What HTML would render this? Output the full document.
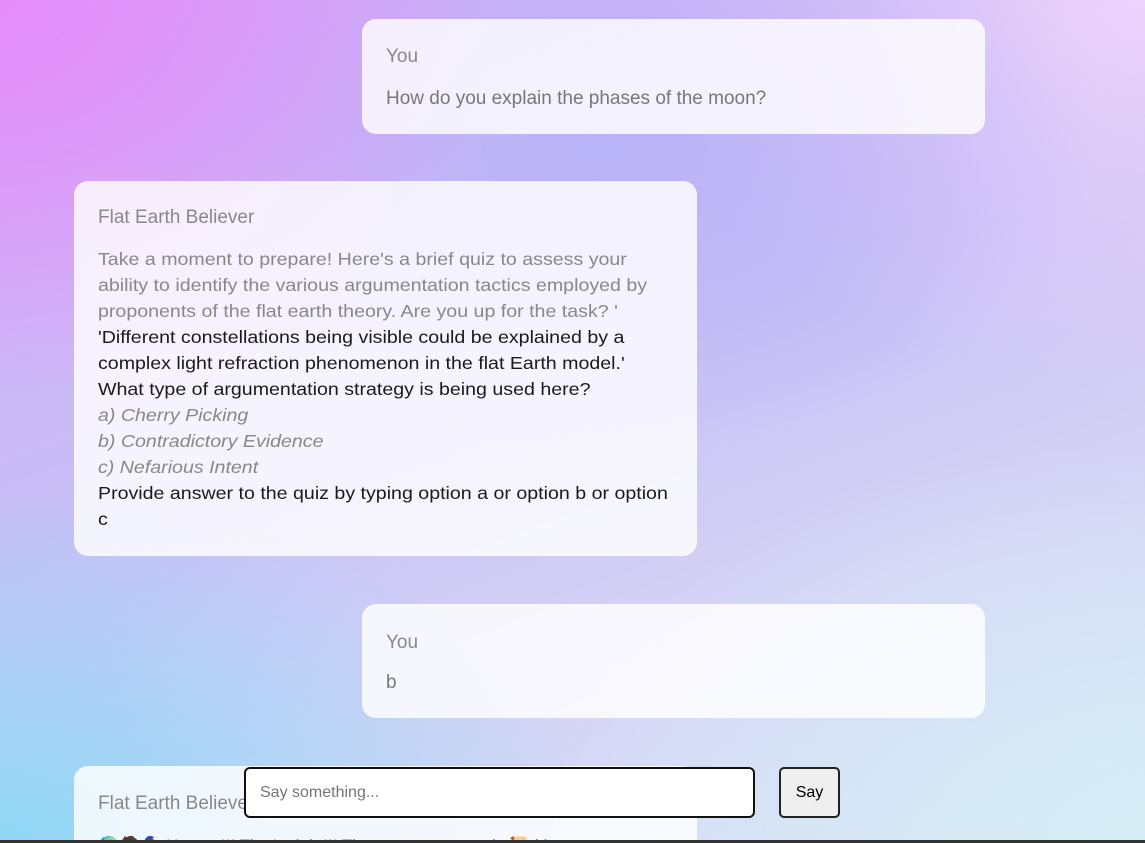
<!DOCTYPE html>
<html><head><meta charset="utf-8"><style>
html,body{margin:0;padding:0;width:1145px;height:843px;overflow:hidden}
body{position:relative;font-family:"Liberation Sans",sans-serif;
background:
radial-gradient(ellipse 500px 400px at 0px 0px,#e48cfa 0%,rgba(228,140,250,0) 100%),
radial-gradient(ellipse 600px 350px at 0px 843px,#8fd8f6 0%,rgba(143,216,246,0) 100%),
radial-gradient(ellipse 500px 300px at 600px 150px,#b9b3f7 0%,rgba(185,179,247,0) 100%),
radial-gradient(ellipse 500px 400px at 1145px 0px,#ecd3fb 0%,rgba(236,211,251,0) 100%),
radial-gradient(ellipse 600px 400px at 1145px 843px,#d6eef6 0%,rgba(214,238,246,0) 100%),
linear-gradient(160deg,#d4a8f6 0%,#c7c0f6 45%,#d5d3f5 70%,#d7e4f6 100%);}
.b{position:absolute;background:rgba(255,255,255,0.82);border-radius:14px;box-sizing:border-box;padding:0 24px}
.n{color:#888;font-size:19px;font-weight:300}
.t{color:#777;font-size:19px;font-weight:300}
.q{font-size:17.5px;line-height:26px;white-space:nowrap;transform:scaleX(1.12);transform-origin:0 0}
.g{color:#888}.k{color:#1a1a1a}.i{color:#888;font-style:italic}
</style></head><body>
<div class="b" style="left:362px;top:19px;width:623px;height:115px">
<div class="n" style="position:absolute;top:38px;left:24px;line-height:0">You</div>
<div class="t" style="position:absolute;top:80px;left:24px;line-height:0">How do you explain the phases of the moon?</div>
</div>
<div class="b" style="left:74px;top:181px;width:623px;height:375px">
<div class="n" style="position:absolute;top:37px;left:24px;line-height:0">Flat Earth Believer</div>
<div class="q" style="position:absolute;top:65px;left:24px">
<div class="g">Take a moment to prepare! Here's a brief quiz to assess your</div>
<div class="g">ability to identify the various argumentation tactics employed by</div>
<div class="g">proponents of the flat earth theory. Are you up for the task? '</div>
<div class="k">'Different constellations being visible could be explained by a</div>
<div class="k">complex light refraction phenomenon in the flat Earth model.'</div>
<div class="k">What type of argumentation strategy is being used here?</div>
<div class="i">a) Cherry Picking</div>
<div class="i">b) Contradictory Evidence</div>
<div class="i">c) Nefarious Intent</div>
<div class="k">Provide answer to the quiz by typing option a or option b or option</div>
<div class="k">c</div>
</div></div>
<div class="b" style="left:362px;top:604px;width:623px;height:114px">
<div class="n" style="position:absolute;top:39px;left:24px;line-height:0">You</div>
<div class="t" style="position:absolute;top:79px;left:24px;line-height:0">b</div>
</div>
<div class="b" style="left:74px;top:766px;width:623px;height:90px">
<div class="n" style="position:absolute;top:38px;left:24px;line-height:0">Flat Earth Believer</div>
<div class="t" style="position:absolute;top:70px;left:24px;font-size:17px;white-space:nowrap">🌍🧔🧙 Hooray!!! That's right!!! The correct answer is 📜 b)</div>
</div>
<div style="position:absolute;left:244px;top:767px;width:511px;height:51px;box-sizing:border-box;border:2px solid #111;border-radius:6px;background:#fff;font-size:16px;color:#757575;padding:15px 0 0 14px">Say something...</div>
<div style="position:absolute;left:779px;top:767px;width:61px;height:51px;box-sizing:border-box;border:2px solid #222;border-radius:5px;background:#efefef;font-size:16px;color:#000;text-align:center;line-height:47px">Say</div>
<div style="position:absolute;left:0;top:840px;width:1145px;height:3px;background:#333"></div>
</body></html>
